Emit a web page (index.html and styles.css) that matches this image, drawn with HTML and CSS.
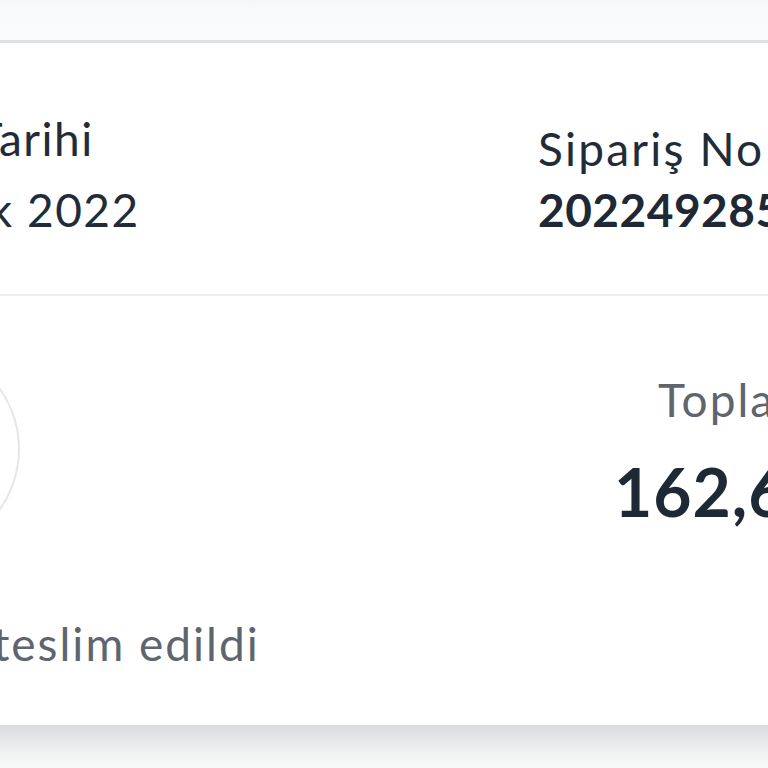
FILE: index.html
```html
<!DOCTYPE html>
<html lang="tr">
<head>
<meta charset="utf-8">
<link rel="stylesheet" href="styles.css">
</head>
<body>
<div class="page">
  <div class="topbar"></div>
  <div class="card">
    <div class="row row-head">
      <div class="info info-date">
        <div class="label">Sipariş Tarihi</div>
        <div class="value">22 Aralık 2022</div>
      </div>
      <div class="info info-no">
        <div class="label">Sipariş No</div>
        <div class="value strong">202249285431</div>
      </div>
    </div>
    <div class="row row-body">
      <div class="status">
        <div class="ring"></div>
        <div class="status-text">Sipariş teslim edildi</div>
      </div>
      <div class="total">
        <div class="total-label">Toplam Tutar</div>
        <div class="total-value">162,60 TL</div>
      </div>
    </div>
  </div>
  <div class="shadow"></div>
</div>
</body>
</html>
```

FILE: styles.css
```css
html, body {
  margin: 0;
  padding: 0;
  background: #f8f8f9;
}
body {
  font-family: "Lato", "Noto Sans", sans-serif;
  color: #212b38;
}
.page {
  width: 768px;
  height: 768px;
  overflow: hidden;
}
.topbar {
  height: 40px;
  background: linear-gradient(#f5f6f7 0, #f9fafb 10px, #fafbfc 100%);
  border-bottom: 3px solid #dfe1e4;
}
.card {
  margin-left: -400px;
  width: 1600px;
  background: #ffffff;
}
.row {
  display: grid;
  grid-template-columns: 691px 1fr;
  padding-left: 247px;
}
.row-head {
  height: 253px;
  box-sizing: border-box;
  padding-bottom: 61px;
  align-items: end;
  border-bottom: 2px solid #eeeeef;
}
.info {
  display: flex;
  flex-direction: column;
  white-space: nowrap;
}
.info-date {
  gap: 25px;
  margin-left: -26px;
}
.info-no { gap: 15px; }
.label, .value {
  font-size: 46px;
  line-height: 46px;
  letter-spacing: 1.5px;
}
.info-no .label { letter-spacing: 2.2px; }
.label { color: #222c39; }
.value { color: #222c39; }
.value.strong {
  font-weight: 700;
  color: #1f2936;
  letter-spacing: 0.5px;
}
.row-body {
  height: 429px;
  box-sizing: border-box;
  align-items: start;
}
.status {
  padding-top: 48px;
  display: flex;
  flex-direction: column;
  align-items: flex-start;
  gap: 67px;
  white-space: nowrap;
}
.ring {
  width: 206px;
  height: 206px;
  margin-left: -37px;
  border: 2px solid #e6e6ea;
  border-radius: 50%;
}
.status-text {
  margin-left: -14px;
  font-size: 46px;
  line-height: 46px;
  letter-spacing: 2px;
  color: #5e656e;
}
.total {
  padding-top: 81px;
  display: flex;
  flex-direction: column;
  gap: 36px;
  white-space: nowrap;
}
.total-label {
  margin-left: 120px;
  font-size: 46px;
  line-height: 46px;
  letter-spacing: 2px;
  color: #5e656e;
}
.total-value {
  margin-left: 76px;
  font-size: 66px;
  line-height: 66px;
  font-weight: 700;
  letter-spacing: 1px;
  color: #1f2936;
}
.shadow {
  height: 41px;
  background: linear-gradient(#dadbde, #eeeff0 60%, #f8f8f8);
}
```
